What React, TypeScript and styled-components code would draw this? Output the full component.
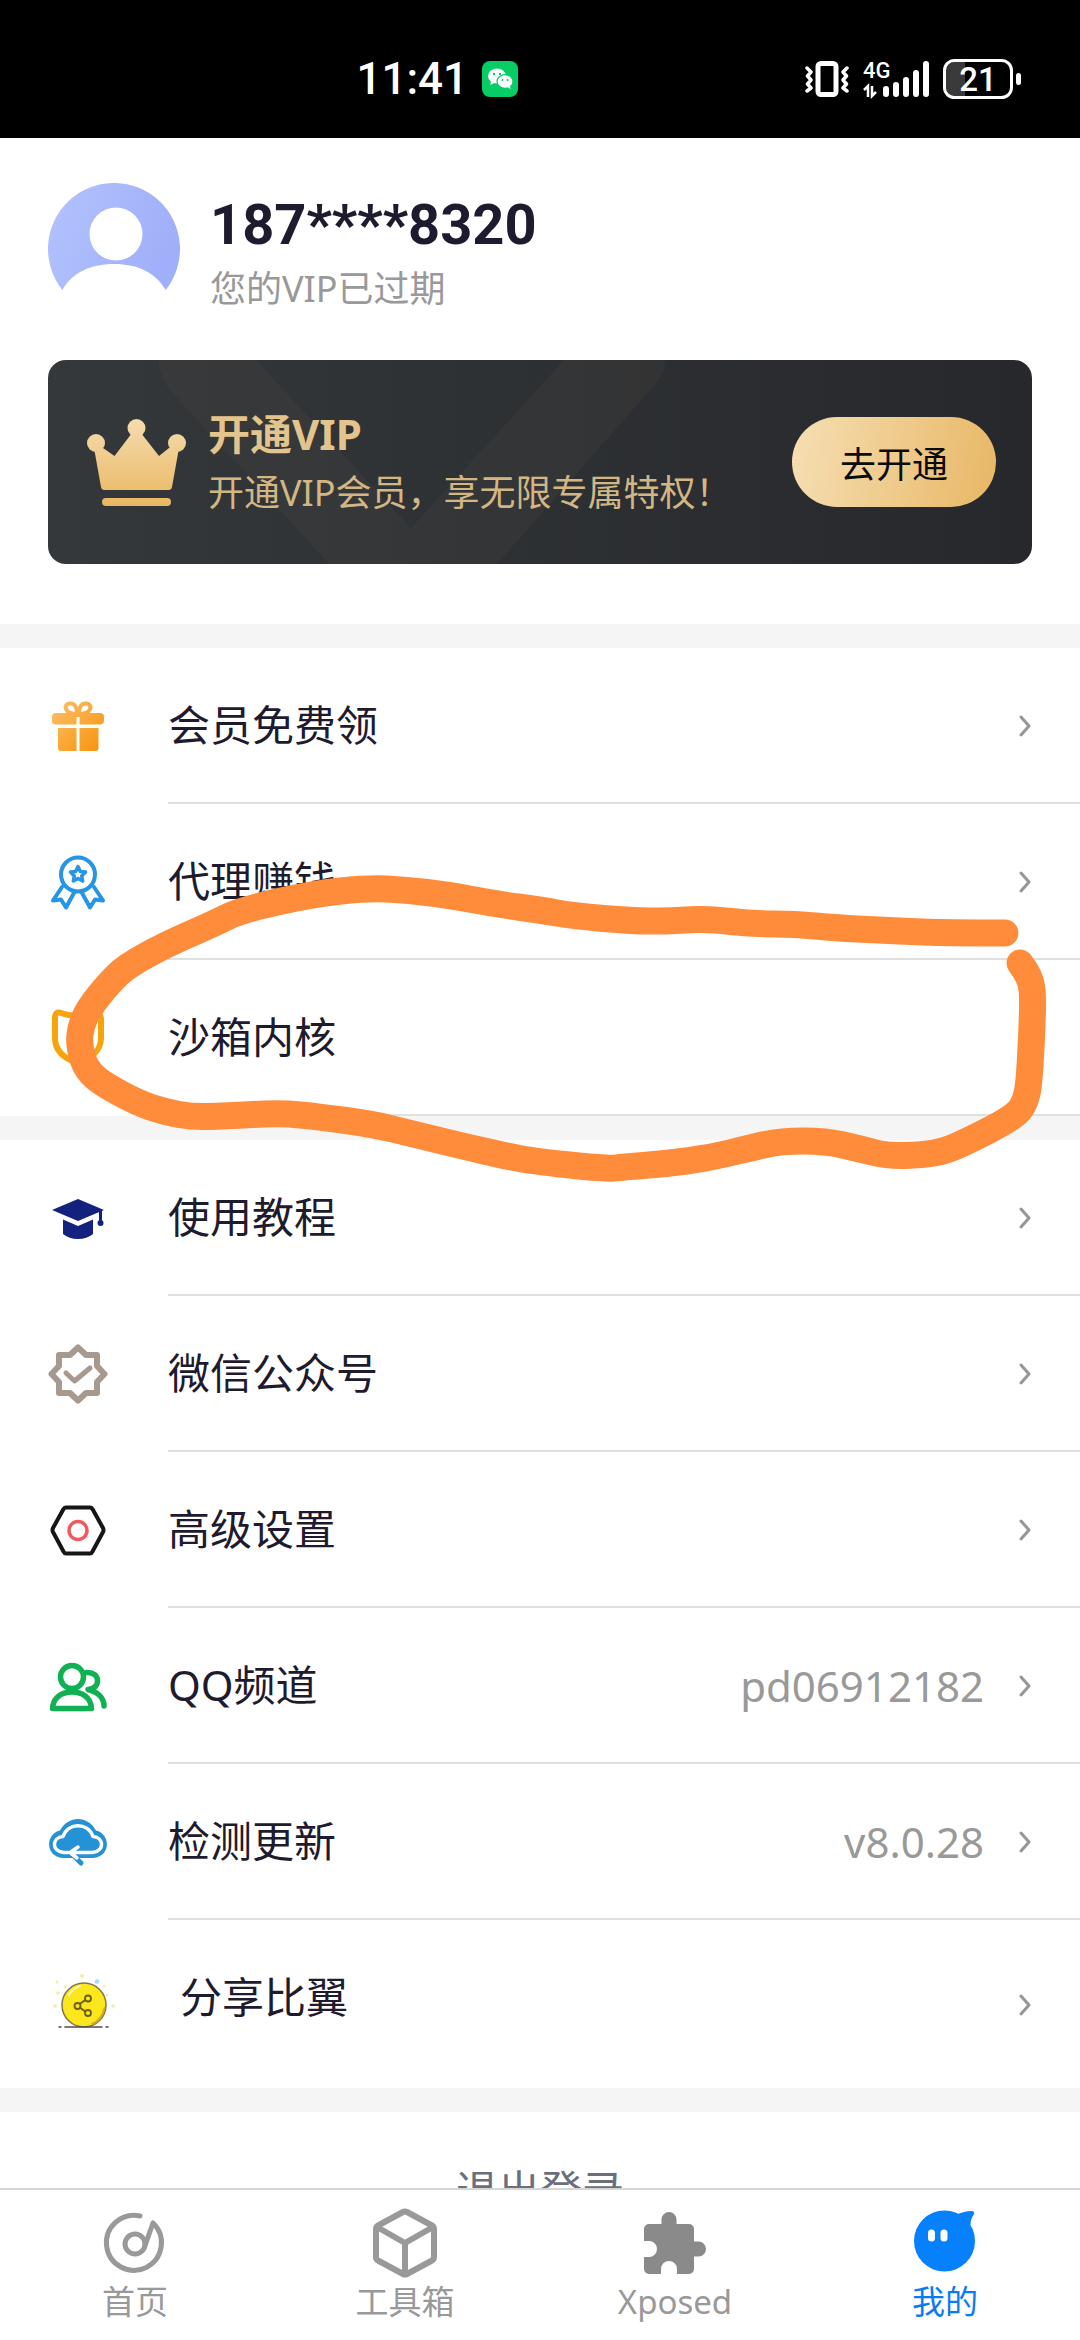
import React from "react";
import styled, { createGlobalStyle } from "styled-components";

const GlobalStyle = createGlobalStyle`
  * { box-sizing: border-box; }
  html, body { margin: 0; padding: 0; background: #fff; }
  body, button {
    font-family: "Noto Sans", "Noto Sans CJK SC", sans-serif;
  }
`;

const Screen = styled.div`
  display: flex;
  flex-direction: column;
  height: 100vh;
  background: #ffffff;
  color: #1f1b2e;
`;

const Content = styled.main`
  flex: 1;
  min-height: 0;
  overflow-y: auto;
  scrollbar-width: none;
`;

/* ---------- status bar ---------- */

const StatusBar = styled.header`
  display: flex;
  flex: none;
  align-items: center;
  justify-content: space-between;
  height: 138px;
  padding: 20px 59px 0 33%;
  background: #000;
  color: #fff;
`;

const StatusGroup = styled.div`
  display: flex;
  align-items: center;
  gap: 14px;
`;

const Clock = styled.time`
  font: 500 44px/52px Roboto, sans-serif;
`;

/* ---------- profile ---------- */

const Profile = styled.section`
  padding: 45px 48px 60px;
`;

const Identity = styled.div`
  display: flex;
  align-items: flex-start;
  gap: 30px;
  height: 132px;
  margin-bottom: 45px;
`;

const IdentityText = styled.div`
  padding-top: 6px;
`;

const Phone = styled.h1`
  margin: 0;
  font: 700 56px/72px Roboto, sans-serif;
  color: #1f1b2e;
`;

const Membership = styled.p`
  margin: 0;
  font-size: 36px;
  line-height: 56px;
  color: #999;
`;

const VipCard = styled.div`
  position: relative;
  display: flex;
  align-items: center;
  gap: 20px;
  height: 204px;
  padding: 0 36px;
  overflow: hidden;
  border-radius: 18px;
  background: linear-gradient(90deg, #35383b, #2e3134 45%, #27282b);
`;

const VipPattern = styled.svg`
  position: absolute;
  top: 0;
  left: 0;
`;

const CrownIcon = styled.svg`
  position: relative;
  flex: none;
`;

const VipText = styled.div`
  position: relative;
  flex: 1;
  min-width: 0;
  padding-top: 4px;
  white-space: nowrap;
`;

const VipTitle = styled.h2`
  margin: 0;
  font-size: 42px;
  font-weight: 700;
  line-height: 58px;
  color: #e3c48c;
`;

const VipHint = styled.p`
  margin: 0;
  font-size: 36px;
  line-height: 60px;
  color: #d2b785;
`;

const VipButton = styled.button`
  position: relative;
  flex: none;
  width: 204px;
  height: 90px;
  padding: 0;
  border: 0;
  border-radius: 45px;
  background: linear-gradient(100deg, #f6dfb4, #e8b765);
  font-size: 36px;
  color: #0b0b0b;
`;

/* ---------- menu ---------- */

const Group = styled.section`
  position: relative;
  border-top: 24px solid #f5f5f5;
`;

const List = styled.ul`
  margin: 0;
  padding: 0;
  list-style: none;
`;

const Row = styled.button<{ $tall?: boolean }>`
  display: flex;
  align-items: center;
  gap: 60px;
  width: 100%;
  height: ${(p) => (p.$tall ? 168 : 156)}px;
  padding: 0 0 0 48px;
  border: 0;
  background: transparent;
  text-align: left;
  color: inherit;
`;

const RowBody = styled.span<{ $line: boolean }>`
  display: flex;
  flex: 1;
  align-items: center;
  gap: 32px;
  height: 100%;
  padding-right: 48px;
  border-bottom: ${(p) => (p.$line ? "2px solid #e0e0e0" : "0")};
`;

const Label = styled.span`
  flex: 1;
  align-self: flex-start;
  font-size: 42px;
  line-height: 154px;
`;

const Value = styled.span`
  font-size: 42px;
  color: #999;
`;

const MenuSvg = styled.svg`
  display: block;
  flex: none;
  fill: none;
  stroke-linecap: round;
  stroke-linejoin: round;
`;

const Highlight = styled.svg`
  position: absolute;
  z-index: 1;
  inset: 0;
  width: 100%;
  height: 100%;
  overflow: visible;
  pointer-events: none;
`;

const Logout = styled.button`
  display: block;
  width: 100%;
  height: 150px;
  padding: 0;
  border: 0;
  background: transparent;
  font-size: 42px;
  color: #6b6f7b;
`;

/* ---------- tab bar ---------- */

const TabBar = styled.nav`
  display: grid;
  flex: none;
  grid-template-columns: repeat(4, 1fr);
  height: 152px;
  border-top: 2px solid #d6d6d6;
  background: #fff;
`;

const Tab = styled.a<{ $active?: boolean }>`
  display: flex;
  flex-direction: column;
  align-items: center;
  padding-top: 17px;
  font-size: 33px;
  line-height: 46px;
  text-decoration: none;
  color: ${(p) => (p.$active ? "#0a7cf0" : "#999")};
`;

/* ---------- icons ---------- */

const WeChatBadge = () => (
  <svg width="36" height="36" viewBox="0 0 36 36" aria-hidden="true">
    <rect width="36" height="36" rx="8" fill="#07cd66" />
    <ellipse cx="15" cy="15" rx="9" ry="7.500" fill="#fff" />
    <path d="M9 20 L8.500 24 L13 21.500Z" fill="#fff" />
    <ellipse cx="23" cy="20.500" rx="8" ry="6.800" fill="#fff" stroke="#07cd66" strokeWidth="1.200" />
    <path d="M25 26 L28.500 28 L28 24Z" fill="#fff" />
    <g fill="#07cd66">
      <circle cx="12" cy="13" r="1.200" />
      <circle cx="18" cy="13" r="1.200" />
      <circle cx="20.500" cy="19" r="1" />
      <circle cx="25.500" cy="19" r="1" />
    </g>
  </svg>
);

const VibrateIcon = () => (
  <svg width="44" height="36" viewBox="0 0 44 36" fill="none" stroke="#fff" strokeLinecap="round" strokeLinejoin="round" aria-hidden="true">
    <rect x="13" y="2.500" width="18" height="31" rx="3" strokeWidth="5" />
    <path d="M2 7 L6 11 L2.500 15 L6 19 L2.500 23 L6 27 L2 30 M42 7 L38 11 L41.500 15 L38 19 L41.500 23 L38 27 L42 30" strokeWidth="3.500" />
  </svg>
);

const SignalIcon = () => (
  <svg width="66" height="40" viewBox="0 -2 66 40" fill="#fff" aria-label="4G">
    <text x="0" y="17" fontFamily="Roboto, sans-serif" fontSize="22" fontWeight="500">4G</text>
    <path d="M1 29 L5 25 V36 M9 25 V35 L13 31" fill="none" stroke="#fff" strokeWidth="2.500" />
    <rect x="20" y="25" width="6" height="11" rx="3" />
    <rect x="30" y="21" width="6" height="15" rx="3" />
    <rect x="40" y="16" width="6" height="20" rx="3" />
    <rect x="50" y="9" width="6" height="27" rx="3" />
    <rect x="60" y="0" width="6" height="36" rx="3" />
  </svg>
);

const BatteryIcon = () => (
  <svg width="78" height="40" viewBox="0 0 78 40" fill="none" aria-label="21">
    <path d="M12 3 H22 V37 H12 A9 9 0 0 1 3 28 V12 A9 9 0 0 1 12 3Z" fill="#3a3a3a" />
    <rect x="1.500" y="1.500" width="67" height="37" rx="10" stroke="#fff" strokeWidth="3" />
    <rect x="73" y="14" width="5" height="12" rx="2.500" fill="#fff" />
    <text x="35" y="32" textAnchor="middle" fill="#fff" fontFamily="Roboto, sans-serif" fontSize="33" fontWeight="500">21</text>
  </svg>
);

const Avatar = () => (
  <svg width="132" height="132" viewBox="0 0 132 132" aria-hidden="true">
    <defs>
      <linearGradient id="avatar" x1="0" y1="0" x2="1" y2="0.300">
        <stop offset="0" stopColor="#b4c3fc" />
        <stop offset="1" stopColor="#a0aff9" />
      </linearGradient>
    </defs>
    <path d="M14.300 107 A66 66 0 1 1 117.700 107 C108 90 90 81 66 81 C42 81 24 90 14.300 107Z" fill="url(#avatar)" />
    <circle cx="68" cy="51" r="26.500" fill="#fff" />
  </svg>
);

const Crown = () => (
  <CrownIcon width="104" height="96" viewBox="0 0 104 96" aria-hidden="true">
    <defs>
      <linearGradient id="crown" gradientUnits="userSpaceOnUse" x1="0" y1="4" x2="0" y2="92">
        <stop offset="0" stopColor="#f5dcb0" />
        <stop offset="1" stopColor="#e9b761" />
      </linearGradient>
    </defs>
    <g fill="url(#crown)">
      <circle cx="12" cy="29" r="9" />
      <circle cx="52.500" cy="14" r="9" />
      <circle cx="93" cy="29" r="9" />
      <path d="M10 34 L17 73 Q17.500 76 20.500 76 H84.500 Q87.500 76 88 73 L95 34 L85 34 L75 42 L57 19 H48 L30.500 42 L19 34Z" />
      <rect x="18" y="84" width="69" height="8" rx="4" />
    </g>
  </CrownIcon>
);

const Gift = () => (
  <MenuSvg width="60" height="60" viewBox="0 1 60 60" aria-hidden="true">
    <defs>
      <linearGradient id="gift" gradientUnits="userSpaceOnUse" x1="5" y1="8" x2="52" y2="56">
        <stop offset="0" stopColor="#fdbf66" />
        <stop offset="1" stopColor="#f7940f" />
      </linearGradient>
    </defs>
    <path d="M29 19 C16 19 15 9 21.500 8.500 C28 8 29 14 29 19 M31 19 C44 19 45 9 38.500 8.500 C32 8 31 14 31 19" stroke="url(#gift)" strokeWidth="4" />
    <g fill="url(#gift)">
      <path d="M8 18 H28.500 V29.500 H8 Q4 29.500 4 25.500 V22 Q4 18 8 18Z" />
      <path d="M28 18 H52 Q56 18 56 22 V25.500 Q56 29.500 52 29.500 H31.500 V22 H28Z" />
      <path d="M10 33 H28.500 V56 H13 Q10 56 10 53Z" />
      <path d="M31.500 33 H50.500 V53 Q50.500 56 47.500 56 H31.500Z" />
    </g>
  </MenuSvg>
);

const Medal = () => (
  <MenuSvg width="60" height="60" viewBox="0 1 60 60" stroke="#2595e6" strokeWidth="4" aria-hidden="true">
    <circle cx="30" cy="23.500" r="17" />
    <path d="M30 15.500 L32.300 20.500 L37.500 21 L33.700 25 L34.700 30 L30 27.500 L25.300 30 L26.300 25 L22.500 21 L27.700 20.500Z" strokeWidth="3.500" />
    <path d="M14 36 L5 49.500 L13 48.500 L18 56.500 L26.500 41 M46 36 L55 49.500 L47 48.500 L42 56.500 L33.500 41" />
  </MenuSvg>
);

const Shield = () => (
  <MenuSvg width="60" height="60" viewBox="0 1 60 60" stroke="#f5a40c" aria-hidden="true">
    <path d="M13 6 Q30 12 46 6 Q53 5 53 12 V31 C53 44 42 52 30 56 C17 52 7 44 7 31 V11 Q7 4 13 6Z" strokeWidth="6" />
  </MenuSvg>
);

const GraduationCap = () => (
  <MenuSvg width="60" height="60" viewBox="0 1 60 60" aria-hidden="true">
    <g fill="#15217e">
      <path d="M30 12 L56 23 L30 34 L4 23Z" />
      <path d="M15 32.500 L30 39 L45 32.500 V47 Q39 52 30 52 Q21 52 15 47Z" />
      <circle cx="52.500" cy="36" r="3" />
    </g>
    <path d="M52.500 24 V35" stroke="#15217e" strokeWidth="3" />
  </MenuSvg>
);

const VerifiedBadge = () => (
  <MenuSvg width="60" height="60" viewBox="0 0 60 60" stroke="#a8998e" strokeWidth="6" aria-hidden="true">
    <path d="M30 3.500 L38 11 H49 V22 L56.500 30 L49 38 V49 H38 L30 56.500 L22 49 H11 V38 L3.500 30 L11 22 V11 H22Z" />
    <path d="M18 29 L26.500 37 L42 24" strokeWidth="5" />
  </MenuSvg>
);

const HexNut = () => (
  <MenuSvg width="60" height="60" viewBox="0 1 60 60" aria-hidden="true">
    <path d="M18 8.500 H42 Q43.500 8.500 44.500 10 L55 29 Q56 31 55 33 L44.500 52.500 Q43.500 54.500 42 54.500 H18 Q16.500 54.500 15.500 52.500 L5 33 Q4 31 5 29 L15.500 10 Q16.500 8.500 18 8.500Z" stroke="#161616" strokeWidth="4" />
    <circle cx="30" cy="31.500" r="9" stroke="#f2595f" strokeWidth="3.500" />
  </MenuSvg>
);

const People = () => (
  <MenuSvg width="60" height="60" viewBox="0 0 60 60" stroke="#10b153" strokeWidth="5.500" aria-hidden="true">
    <circle cx="24" cy="21" r="11.500" />
    <path d="M4.500 52.500 C5 42 13 36 24 36 C35 36 43 42 43.500 52.500Z" />
    <path d="M38.500 16.500 C53 15.500 53 33 40 33.500 C50 36 56 42 56 50" />
  </MenuSvg>
);

const CloudUpdate = () => (
  <MenuSvg width="60" height="60" viewBox="0 1 60 60" aria-hidden="true">
    <path d="M15 47 C-3 46 -3 23 12 19.500 C20 4 40 4 48 19.500 C63 23 63 46 45 47Z" fill="#2492d4" />
    <path d="M25 44 L33 52" stroke="#2492d4" strokeWidth="5" />
    <path d="M20 41.500 H15.500 C3 40 4 26.500 15 25.500 C20 11 40 11 45 25.500 C56 26.500 57 40 44.500 41.500 H22 L30 36 M22 41.500 L29 47" stroke="#fff" strokeWidth="3.500" />
  </MenuSvg>
);

const ShareCoin = () => (
  <MenuSvg width="72" height="72" viewBox="0 0 72 72" aria-hidden="true">
    <circle cx="36" cy="37" r="22" fill="#fbe71e" stroke="#85764f" strokeWidth="1.500" />
    <path d="M21 27 Q25 20 32 18" stroke="#fff9b5" strokeWidth="2" />
    <path d="M44 56 Q54 52 56.500 40" stroke="#d9a91a" strokeWidth="2" />
    <path d="M38 31.500 L31 36.500 M31 39 L38 44" stroke="#6d5f16" strokeWidth="2" />
    <g fill="#fbe71e" stroke="#6d5f16" strokeWidth="1.800">
      <circle cx="29.500" cy="38" r="3" />
      <circle cx="40" cy="30.500" r="3" />
      <circle cx="40" cy="45" r="3" />
    </g>
    <path d="M11 59 H13 M17 59 H54 M58 59 H60" stroke="#4d4a52" strokeWidth="1.500" />
    <g fill="#f7eda0">
      <circle cx="34" cy="8" r="2" />
      <circle cx="9" cy="14" r="1.500" />
      <circle cx="10" cy="25" r="1.800" />
      <circle cx="7" cy="38" r="1.800" />
      <circle cx="59" cy="27" r="1.500" />
      <circle cx="65" cy="38" r="1.800" />
      <circle cx="17" cy="19" r="1.300" />
      <circle cx="56" cy="18" r="1.300" />
    </g>
    <circle cx="49" cy="13.500" r="2.200" fill="#a6daf6" />
  </MenuSvg>
);

const Chevron = () => (
  <MenuSvg width="16" height="24" viewBox="0 0 16 24" stroke="#969696" strokeWidth="3" aria-hidden="true">
    <path d="M5 4 L13 13 L5 22" />
  </MenuSvg>
);

const DiscIcon = () => (
  <MenuSvg width="72" height="72" viewBox="0 0 72 72" stroke="#999" strokeWidth="5" aria-hidden="true">
    <path d="M41 9 A27.500 27.500 0 1 0 54 16 L45.500 40" />
    <circle cx="36" cy="37" r="10" />
  </MenuSvg>
);

const BoxIcon = () => (
  <MenuSvg width="72" height="72" viewBox="0 0 72 72" stroke="#999" strokeWidth="6" aria-hidden="true">
    <path d="M34 5 Q36 4 38 5 L63 18.500 Q65 20 65 22 V50 Q65 52.500 63 53.500 L38 67 Q36 68 34 67 L9 53.500 Q7 52.500 7 50 V22 Q7 20 9 18.500Z" />
    <path d="M8 20 L36 36 L64 20 M36 36 V67" />
  </MenuSvg>
);

const PuzzleIcon = () => (
  <MenuSvg width="72" height="72" viewBox="0 0 72 72" aria-hidden="true">
    <path
      fill="#8a8a8a"
      d="M10 17 H22.500 V12.500 a7.500 7.500 0 0 1 15 0 V17 H50 a5 5 0 0 1 5 5 V34.500 H59.500 a7.500 7.500 0 0 1 0 15 H55 V62 a5 5 0 0 1 -5 5 H38 V62 a8 8 0 0 0 -16 0 V67 H10 a5 5 0 0 1 -5 -5 V50 H10 a8 8 0 0 0 0 -16 H5 V22 a5 5 0 0 1 5 -5Z"
    />
  </MenuSvg>
);

const FaceIcon = () => (
  <MenuSvg width="72" height="72" viewBox="0 0 72 72" aria-hidden="true">
    <circle cx="35.500" cy="34" r="30.500" fill="#0680fb" />
    <path d="M46 8.500 Q54 4 63 4 Q66.500 4.500 64.500 8 Q61.500 12 61.500 18Z" fill="#0680fb" />
    <rect x="19" y="22.500" width="7" height="12" rx="3.500" fill="#fff" />
    <rect x="31.500" y="22.500" width="7" height="12" rx="3.500" fill="#fff" />
  </MenuSvg>
);

/* ---------- data ---------- */

interface Item {
  label: string;
  icon: React.ReactNode;
  value?: string;
  tall?: boolean;
}

const memberItems: Item[] = [
  { label: "会员免费领", icon: <Gift /> },
  { label: "代理赚钱", icon: <Medal /> },
  { label: "沙箱内核", icon: <Shield /> },
];

const settingItems: Item[] = [
  { label: "使用教程", icon: <GraduationCap /> },
  { label: "微信公众号", icon: <VerifiedBadge /> },
  { label: "高级设置", icon: <HexNut /> },
  { label: "QQ频道", icon: <People />, value: "pd06912182" },
  { label: "检测更新", icon: <CloudUpdate />, value: "v8.0.28" },
  { label: "分享比翼", icon: <ShareCoin />, tall: true },
];

const tabs = [
  { label: "首页", icon: <DiscIcon /> },
  { label: "工具箱", icon: <BoxIcon /> },
  { label: "Xposed", icon: <PuzzleIcon /> },
  { label: "我的", icon: <FaceIcon />, active: true },
];

/* Points of the hand-drawn marker line, joined by curves through their midpoints. */
const markerPoints: [number, number][] = [
  [1005, 933], [946, 933], [898, 931], [836, 928], [795, 924], [753, 924], [709, 919],
  [685, 920], [667, 921], [633, 921], [574, 916], [540, 910], [496, 904], [448, 895],
  [406, 890], [368, 888], [313, 894], [241, 910], [213, 924], [165, 945], [127, 966],
  [110, 982], [89, 1008], [81, 1026], [79, 1042], [83, 1061], [90, 1073], [103, 1084],
  [138, 1103], [165, 1112], [193, 1117], [224, 1116], [281, 1113], [320, 1117],
  [372, 1124], [413, 1134], [458, 1145], [510, 1157], [540, 1162], [609, 1169],
  [623, 1167], [664, 1164], [709, 1158], [750, 1148], [781, 1141], [826, 1141],
  [860, 1149], [888, 1156], [922, 1155], [946, 1151], [974, 1138], [1001, 1124],
  [1018, 1113], [1025, 1102], [1029, 1085], [1032, 1029], [1033, 992], [1029, 976],
  [1020, 963],
];

const markerPath = markerPoints.reduce((path, [x, y], i) => {
  if (i === 0) return `M${x} ${y}`;
  const next = markerPoints[i + 1];
  if (!next) return `${path} L${x} ${y}`;
  return `${path} Q${x} ${y} ${(x + next[0]) / 2} ${(y + next[1]) / 2}`;
}, "");

const Menu = ({ items }: { items: Item[] }) => (
  <List>
    {items.map((item) => (
      <li key={item.label}>
        <Row type="button" $tall={item.tall}>
          {item.icon}
          <RowBody $line={!item.tall}>
            <Label>{item.label}</Label>
            {item.value && <Value>{item.value}</Value>}
            <Chevron />
          </RowBody>
        </Row>
      </li>
    ))}
  </List>
);

export default function App() {
  return (
    <Screen>
      <GlobalStyle />
      <StatusBar>
        <StatusGroup>
          <Clock>11:41</Clock>
          <WeChatBadge />
        </StatusGroup>
        <StatusGroup>
          <VibrateIcon />
          <SignalIcon />
          <BatteryIcon />
        </StatusGroup>
      </StatusBar>

      <Content>
        <Profile>
          <Identity>
            <Avatar />
            <IdentityText>
              <Phone>187****8320</Phone>
              <Membership>您的VIP已过期</Membership>
            </IdentityText>
          </Identity>
          <VipCard>
            <VipPattern width="640" height="204" viewBox="0 0 640 204" aria-hidden="true">
              <path d="M110 0 H208 L363 168 L516 0 H617 Q617 12 611 20 L449 204 H281 L120 28 Q112 16 110 0Z" fill="#48453f" fillOpacity="0.250" />
            </VipPattern>
            <Crown />
            <VipText>
              <VipTitle>开通VIP</VipTitle>
              <VipHint>开通VIP会员，享无限专属特权！</VipHint>
            </VipText>
            <VipButton type="button">去开通</VipButton>
          </VipCard>
        </Profile>

        <Group>
          <Menu items={memberItems} />
          <Highlight viewBox="0 648 1080 468" preserveAspectRatio="none" aria-hidden="true">
            <path d={markerPath} fill="none" stroke="#ff8c3b" strokeWidth="27" strokeLinecap="round" strokeLinejoin="round" />
          </Highlight>
        </Group>

        <Group>
          <Menu items={settingItems} />
        </Group>

        <Group>
          <Logout type="button">退出登录</Logout>
        </Group>
      </Content>

      <TabBar>
        {tabs.map((tab) => (
          <Tab key={tab.label} href="#" $active={tab.active}>
            {tab.icon}
            {tab.label}
          </Tab>
        ))}
      </TabBar>
    </Screen>
  );
}
